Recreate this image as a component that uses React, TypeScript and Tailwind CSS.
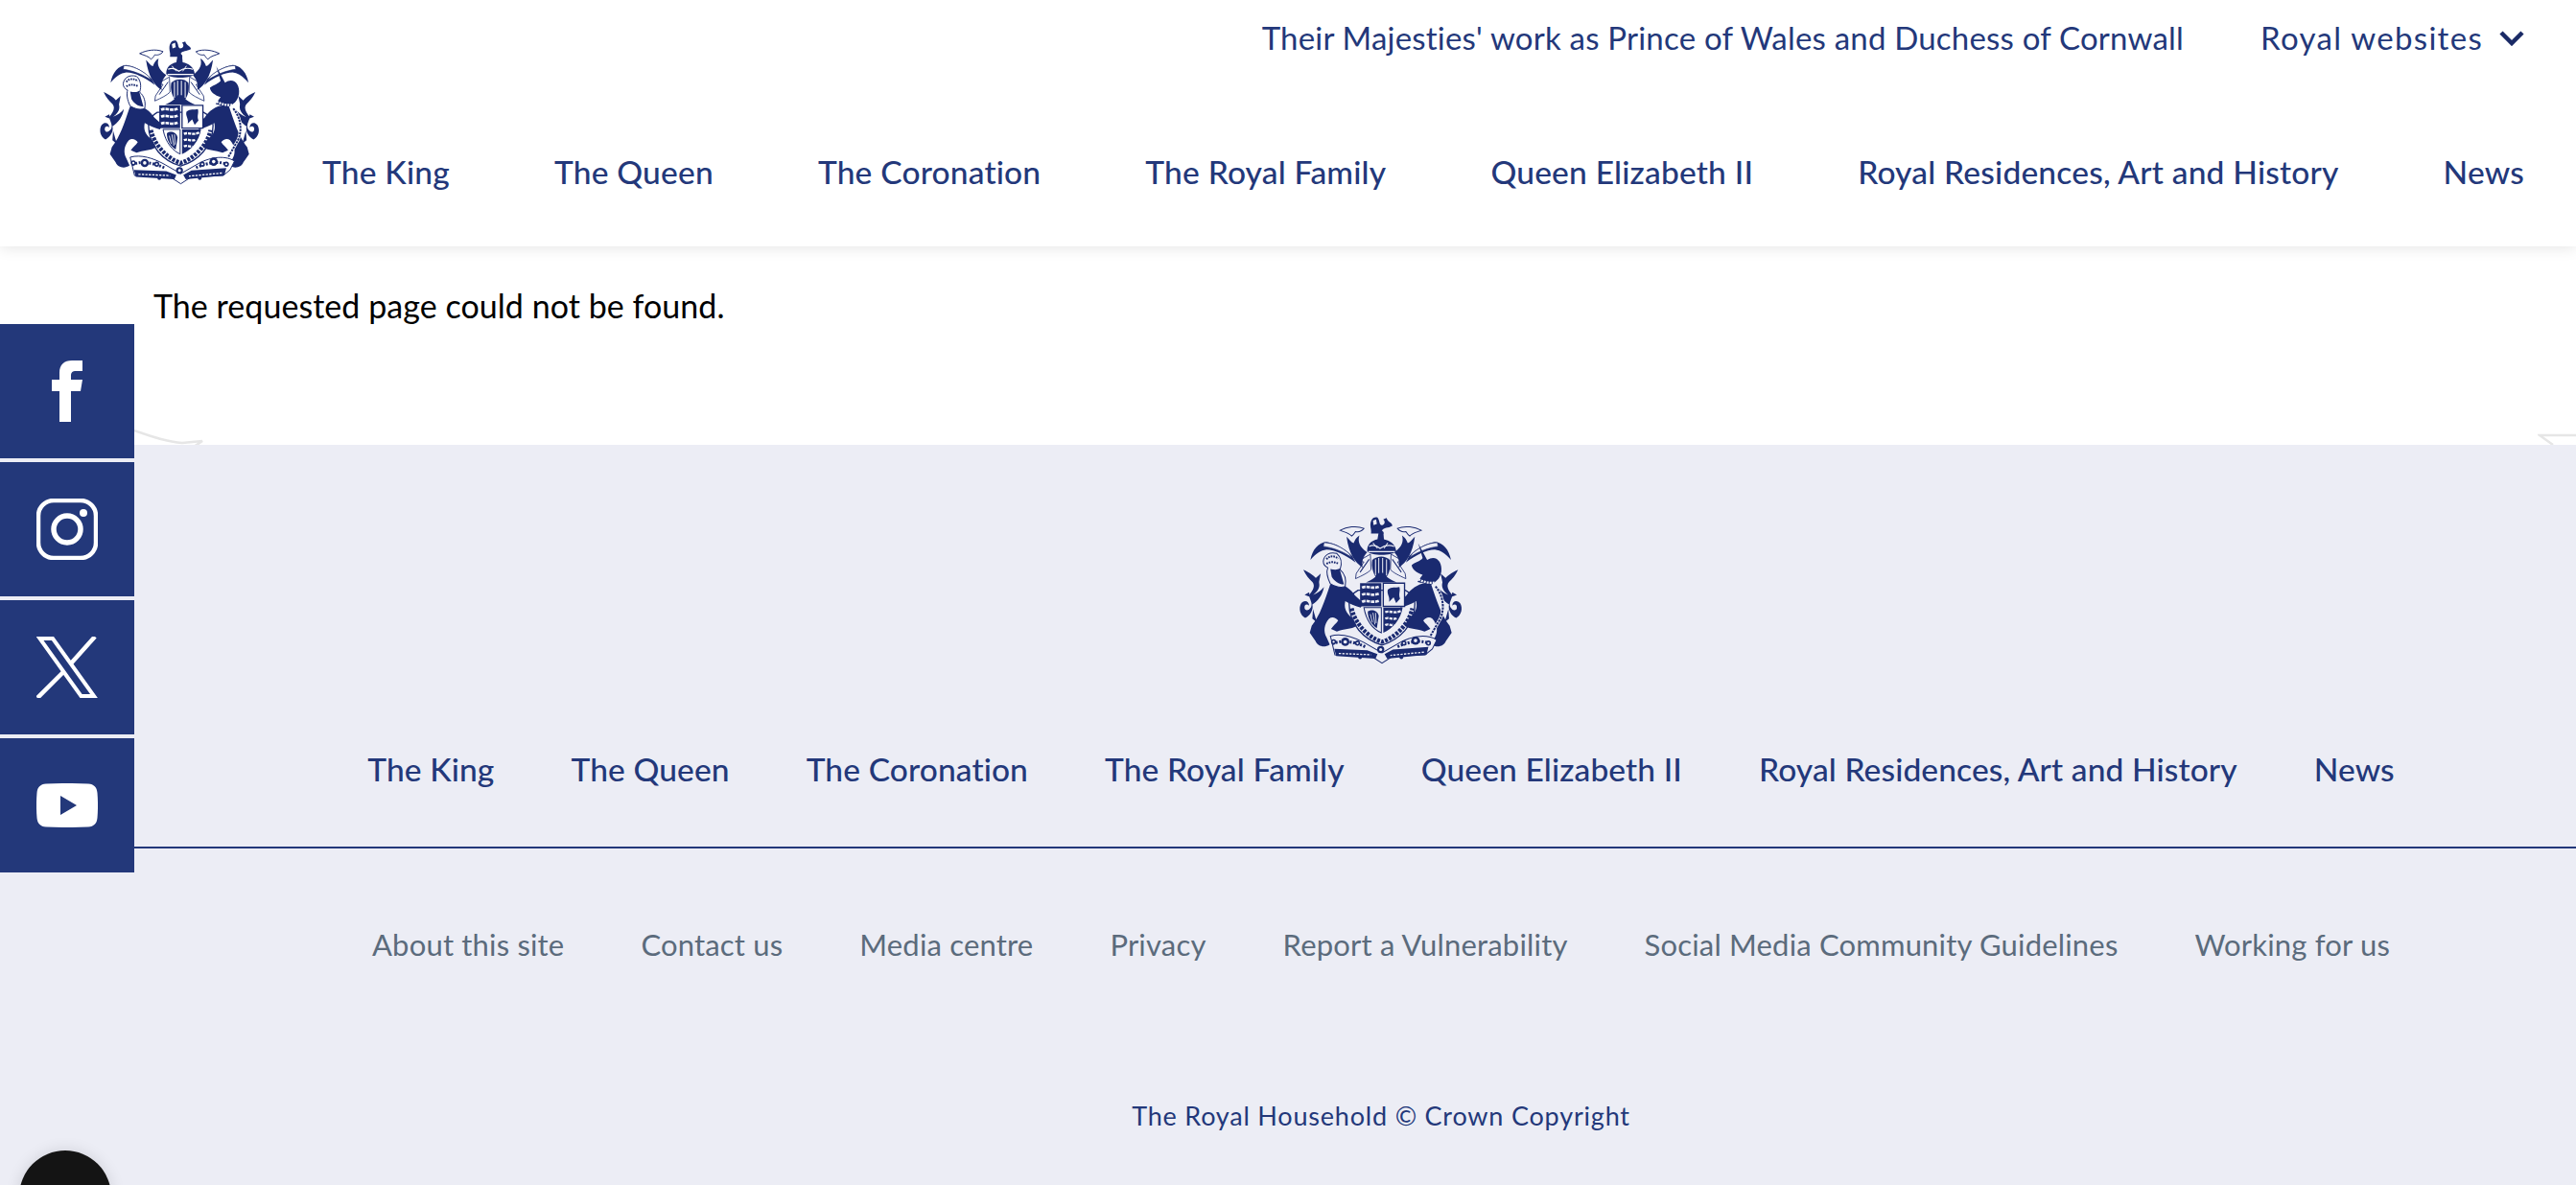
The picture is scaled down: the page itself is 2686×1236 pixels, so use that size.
const NAV = ["The King", "The Queen", "The Coronation", "The Royal Family", "Queen Elizabeth II", "Royal Residences, Art and History", "News"];
const LINKS = ["About this site", "Contact us", "Media centre", "Privacy", "Report a Vulnerability", "Social Media Community Guidelines", "Working for us"];

// one side of the arms, drawn once and mirrored for the other
function CrestSide({ ink, paper }: { ink: string; paper: string }) {
  return (
    <g>
      {/* scroll above the helm */}
      <path d="M256 166 C276 156 306 150 330 160 C322 170 312 172 304 170 C300 176 298 180 292 184 C284 174 270 172 256 166Z" fill={paper} stroke={ink} strokeWidth="3" />
      <path d="M276 186 C284 194 290 204 298 206 C302 196 306 188 316 182 C310 200 316 218 340 234 C328 248 322 262 326 282 C302 266 284 240 276 186Z" fill={ink} />
      {/* long mantling */}
      <path d="M164 258 C170 226 188 204 214 202 C240 206 268 220 294 246 L304 266 C272 242 240 226 214 226 C196 228 180 240 164 258Z" fill={ink} />
      <path d="M206 204 C232 204 262 218 284 238 L292 250 C266 232 234 220 204 216Z" fill={paper} stroke={ink} strokeWidth="2" />
      {/* tail curl */}
      <path d="M142 288 C160 296 178 306 190 326 C196 342 186 356 172 366 C186 362 198 352 206 342 C202 366 188 386 170 396 C174 412 164 430 148 438 C132 430 126 408 136 392 C146 380 160 386 160 400 C152 392 144 398 146 408 C150 418 160 414 166 404 C172 390 160 378 160 366 C172 352 180 338 170 326 C160 316 150 306 142 288Z" fill={ink} />
      <path d="M172 322 L196 300 L190 330Z M146 366 L162 372 L160 358Z M170 440 L184 452 L172 410Z" fill={ink} />
      {/* supporter's body: lion here, unicorn when mirrored */}
      <path d="M225 335 C252 320 288 345 302 368 L328 392 L320 406 C304 402 288 396 272 386 C268 406 272 422 296 440 L308 462 C290 474 268 470 246 480 L228 472 C236 460 244 456 250 446 C244 438 232 432 222 440 C206 458 204 480 214 498 L224 520 C208 532 186 526 180 510 L162 484 L168 462 C194 430 208 385 225 335Z" fill={ink} />
    </g>
  );
}

function Crest({ className, paper }: { className: string; paper: string }) {
  const ink = "#1a2a70";
  return (
    <svg viewBox="128 118 510 464" className={className} aria-hidden="true">
      {/* mantling behind the helm */}
      <path d="M304 316 C326 306 342 298 352 288 L350 240 L312 262 L330 264 L306 300Z M460 316 C438 306 422 298 412 288 L414 240 L452 262 L434 264 L458 300Z" fill={paper} stroke={ink} strokeWidth="2.5" />
      <path d="M318 296 L346 256 M446 296 L418 256" stroke={ink} strokeWidth="3" />
      {/* garter */}
      <path d="M284 392 C284 378 294 362 312 352 L458 352 C478 362 488 378 488 394 C488 460 440 506 386 522 C330 506 284 458 284 392Z" fill={paper} stroke={ink} strokeWidth="4" />
      <path d="M292 408 C300 450 340 498 386 512 C432 498 472 450 480 408" stroke={ink} strokeWidth="13" strokeDasharray="9 4" fill="none" />
      <CrestSide ink={ink} paper={paper} />
      <g transform="matrix(-1 0 0 1 764 0)">
        <CrestSide ink={ink} paper={paper} />
      </g>
      {/* crest lion */}
      <path d="M350 150 C350 132 360 122 372 126 C380 136 376 146 384 150 C394 150 398 140 390 132 L400 128 C404 142 418 142 418 152 C404 160 392 156 386 166 L392 176 L352 176 C354 166 350 160 350 150Z" fill={ink} />
      <path d="M358 136 L368 132 L370 146 L360 150Z" fill={paper} />
      {/* crown */}
      <path d="M340 230 C340 208 354 198 372 194 L376 170 L390 170 L392 194 C412 198 428 210 430 230 C420 246 350 246 340 230Z" fill={ink} />
      <path d="M346 216 C358 210 368 212 380 222 C394 212 408 210 424 216 M344 232 H426" stroke={paper} strokeWidth="3.5" fill="none" />
      <path d="M358 205 L372 222 M404 205 L392 222" stroke={paper} strokeWidth="3" />
      {/* helm */}
      <path d="M356 258 C372 244 396 244 410 258 C414 278 410 300 396 316 H370 C358 300 352 278 356 258Z" fill={ink} />
      <path d="M366 256 V306 M376 252 V310 M388 252 V310 M400 256 V306" stroke={paper} strokeWidth="3" />
      <path d="M336 328 C360 318 370 308 376 298 H390 C396 308 408 318 432 328Z" fill={ink} />
      {/* quarters */}
      <path d="M318 330 H384 V402 H318Z" fill={ink} />
      <path d="M324 344 C340 336 354 350 378 340 M324 366 C340 358 354 372 378 362 M324 388 C340 380 354 394 378 384" stroke={paper} strokeWidth="8" strokeDasharray="11 3" fill="none" />
      <path d="M390 330 H456 V402 H390Z" fill={paper} stroke={ink} strokeWidth="4" />
      <path d="M404 350 C416 340 428 346 440 342 C444 356 436 362 442 378 L430 392 L422 374 L408 388 C412 372 400 364 404 350Z" fill={ink} />
      <path d="M330 406 H384 V484 C362 474 338 450 330 406Z" fill={paper} stroke={ink} strokeWidth="3" />
      <path d="M342 418 C356 408 374 416 376 432 L370 470 C352 458 342 440 342 418Z" fill={ink} />
      <path d="M350 426 L356 452 M358 422 L364 458 M366 422 L368 454" stroke={paper} strokeWidth="2.5" />
      <path d="M390 406 H450 C444 444 418 472 390 484Z" fill={ink} />
      <path d="M396 420 C410 414 424 426 444 416 M396 440 C408 434 420 446 434 438 M396 460 C406 454 414 464 422 458" stroke={paper} strokeWidth="7" strokeDasharray="10 3" fill="none" />
      {/* lion's head */}
      <path d="M204 262 C206 242 224 232 246 238 C260 250 262 270 256 288 C270 300 276 318 272 340 C256 346 240 340 226 332 C216 312 214 292 218 282 C210 278 204 272 204 262Z" fill={paper} stroke={ink} strokeWidth="3" />
      <path d="M214 256 C222 244 240 244 250 254 M214 270 C226 262 240 264 252 270" stroke={ink} strokeWidth="6" strokeDasharray="5 3" fill="none" />
      <path d="M226 286 C236 288 248 290 254 284 L268 334 C252 334 238 324 230 310Z" fill={ink} />
      {/* unicorn's head, collar and chain */}
      <path d="M498 206 L526 258 C552 240 574 262 570 294 C566 318 552 326 536 336 L496 326 L512 304 C494 298 480 288 478 274 C490 264 506 262 512 252Z" fill={ink} />
      <path d="M486 306 C500 324 530 332 552 328" stroke={paper} strokeWidth="7" strokeDasharray="6 3" fill="none" />
      <path d="M552 340 C582 376 580 424 560 452 L536 494" stroke={paper} strokeWidth="10" fill="none" />
      <path d="M552 340 C582 376 580 424 560 452 L536 494" stroke={ink} strokeWidth="6" strokeDasharray="7 3" fill="none" />
      {/* flowers and motto */}
      <path d="M226 494 C260 484 300 498 330 514 L386 546 L442 514 C470 498 520 484 556 506 L542 534 L520 552 L420 556 L386 578 L352 556 L240 552 Z" fill={paper} stroke={ink} strokeWidth="3" />
      <path d="M232 518 C262 504 300 512 336 528 M536 518 C506 504 468 512 432 528" stroke={ink} strokeWidth="9" strokeDasharray="6 5" fill="none" />
      <path d="M238 534 L340 538 L372 550 L366 564 L244 556Z M530 528 L420 536 L394 550 L402 564 L524 552Z" fill={ink} />
      <path d="M252 548 L352 552 M516 544 L412 554" stroke={paper} strokeWidth="4" strokeDasharray="7 4" />
      {[[272, 512, 13], [490, 508, 13], [236, 512, 8], [530, 516, 8], [310, 516, 8], [454, 516, 8], [382, 536, 11]].map(([cx, cy, r]) => (
        <g key={cx}>
          <circle cx={cx} cy={cy} r={r} fill={ink} />
          <circle cx={cx} cy={cy} r={r * 0.42} fill={paper} />
        </g>
      ))}
      <circle cx="318" cy="560" r="6" fill={ink} />
      <circle cx="446" cy="560" r="6" fill={ink} />
    </svg>
  );
}

function SocialTile({ children }: { children: React.ReactNode }) {
  return <a className="flex h-[140px] w-[140px] items-center justify-center bg-[#23387a] text-white">{children}</a>;
}

export default function App() {
  return (
    <div className="relative h-[1236px] w-full overflow-hidden bg-white font-['Lato',sans-serif] text-[#23387a]">
      <header className="relative z-10 flex h-[257px] bg-white pl-[103px] pr-[54px] shadow-[0_2px_14px_rgba(0,0,0,0.1)]">
        <div className="w-[233px] shrink-0 pt-[40px]">
          <Crest className="h-[153px] w-[169px]" paper="#ffffff" />
        </div>
        <div className="flex flex-1 flex-col">
          <div className="flex h-[80px] items-center justify-end text-[33px]">
            <a className="tracking-[0.2px]">Their Majesties' work as Prince of Wales and Duchess of Cornwall</a>
            <a className="ml-[80px] tracking-[1.3px]">Royal websites</a>
            <svg viewBox="0 0 26 16" className="ml-[17px] h-[16px] w-[26px]" fill="none" stroke="#1a2a66" strokeWidth="4.5">
              <path d="M2 2 L13 13 L24 2" />
            </svg>
          </div>
          <nav className="mt-[79px] flex h-[40px] items-center justify-between text-[33.5px] font-medium tracking-[0.2px]">
            {NAV.map((n) => (
              <a key={n}>{n}</a>
            ))}
          </nav>
        </div>
      </header>

      <main className="relative h-[207px] pl-[160px] pt-[42px] text-[34px] leading-[40px] tracking-[0.05px] text-black">
        <p>The requested page could not be found.</p>
        <svg viewBox="0 0 80 16" className="absolute bottom-0 left-[135px] h-[16px] w-[80px]" fill="none" stroke="#e6e6e6" strokeWidth="2.5">
          <path d="M5 1 C25 8 40 13 55 14 L76 12 L64 20" />
        </svg>
        <svg viewBox="0 0 40 16" className="absolute bottom-0 right-0 h-[16px] w-[40px]" fill="none" stroke="#e6e6e6" strokeWidth="2.5">
          <path d="M40 6 L2 6 L16 16" />
        </svg>
      </main>

      <footer className="h-[772px] bg-[#ecedf5] pl-[194px] pt-[73px]">
        <div className="flex justify-center">
          <Crest className="h-[156px] w-[174px]" paper="#ecedf5" />
        </div>
        <nav className="mt-[89px] flex h-[40px] items-center justify-center gap-[80px] text-[33.5px] font-medium tracking-[0.12px]">
          {NAV.map((n) => (
            <a key={n}>{n}</a>
          ))}
        </nav>
        <div className="-ml-[54px] mt-[61px] h-[2px] bg-[#23387a]" />
        <div className="mt-[80px] flex h-[40px] items-center justify-center gap-[80px] text-[31px] tracking-[0.18px] text-[#5b6b7c]">
          {LINKS.map((l) => (
            <a key={l}>{l}</a>
          ))}
        </div>
        <p className="mt-[139px] text-center text-[27px] leading-[40px] tracking-[0.8px]">The Royal Household © Crown Copyright</p>
      </footer>

      <div className="absolute left-0 top-[338px] z-20 flex flex-col gap-[4px]">
        <SocialTile>
          <svg viewBox="0 0 32 64" className="h-[64px] w-[32px]" fill="currentColor">
            <path d="M8 64 V32 H0 V20 H8 V13 C8 4 13 0 21 0 H32 V11 H25 C22 11 20 12 20 16 V20 H32 L30 32 H20 V64Z" />
          </svg>
        </SocialTile>
        <SocialTile>
          <svg viewBox="0 0 64 64" className="h-[64px] w-[64px]" fill="none" stroke="currentColor" strokeWidth="4.5">
            <rect x="2" y="2" width="60" height="60" rx="16" />
            <circle cx="32" cy="32" r="14" strokeWidth="5.5" />
            <circle cx="49" cy="15" r="4" fill="currentColor" stroke="none" />
          </svg>
        </SocialTile>
        <SocialTile>
          <svg viewBox="0 0 64 64" className="h-[64px] w-[64px]" fill="none" stroke="currentColor">
            <path d="M3.5 2 H17 L60 62 H46.5Z" strokeWidth="4" />
            <path d="M61 0 L36 28 M28 37 L1 64" strokeWidth="4.5" />
          </svg>
        </SocialTile>
        <SocialTile>
          <svg viewBox="0 0 64 46" className="h-[46px] w-[64px]" fill="currentColor">
            <path fillRule="evenodd" d="M10 0.5 C24 -0.2 40 -0.2 54 0.5 C60 1 63 4 63.5 10 C64.2 18 64.2 28 63.5 36 C63 42 60 45 54 45.5 C40 46.2 24 46.2 10 45.5 C4 45 1 42 0.5 36 C-0.2 28 -0.2 18 0.5 10 C1 4 4 1 10 0.5Z M25 13 V33 L42 23Z" />
          </svg>
        </SocialTile>
      </div>

      <div className="absolute left-[20px] top-[1200px] z-20 h-[96px] w-[96px] rounded-full bg-[#141414] shadow-[0_0_16px_rgba(0,0,0,0.12)]" />
    </div>
  );
}
